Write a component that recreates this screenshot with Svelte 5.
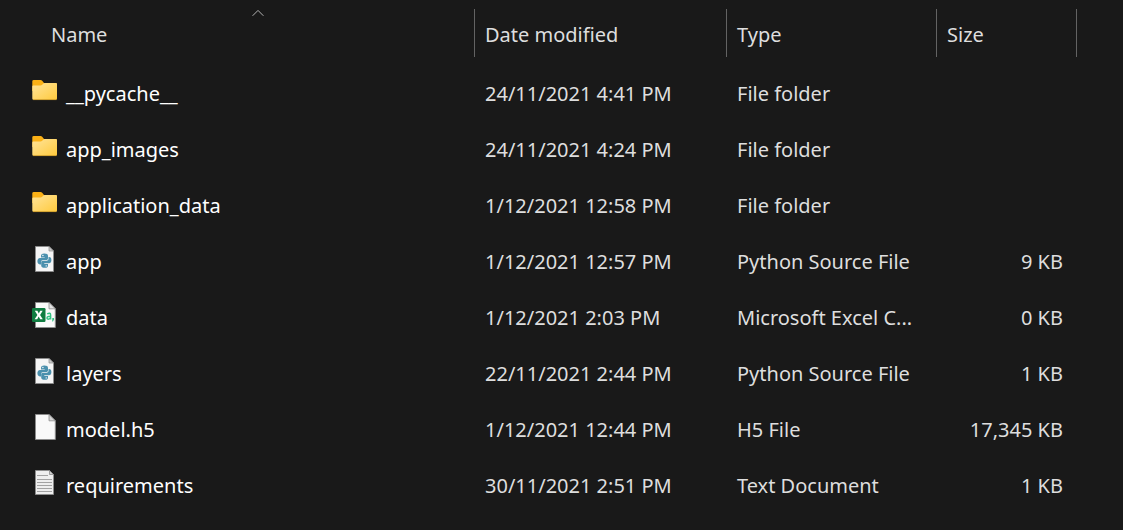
<script>
  const columns = [
    { key: 'name', label: 'Name', sorted: true },
    { key: 'date', label: 'Date modified' },
    { key: 'type', label: 'Type' },
    { key: 'size', label: 'Size' }
  ];

  const files = [
    { icon: 'folder', name: '__pycache__', date: '24/11/2021 4:41 PM', type: 'File folder', size: '' },
    { icon: 'folder', name: 'app_images', date: '24/11/2021 4:24 PM', type: 'File folder', size: '' },
    { icon: 'folder', name: 'application_data', date: '1/12/2021 12:58 PM', type: 'File folder', size: '' },
    { icon: 'python', name: 'app', date: '1/12/2021 12:57 PM', type: 'Python Source File', size: '9 KB' },
    { icon: 'excel', name: 'data', date: '1/12/2021 2:03 PM', type: 'Microsoft Excel C...', size: '0 KB' },
    { icon: 'python', name: 'layers', date: '22/11/2021 2:44 PM', type: 'Python Source File', size: '1 KB' },
    { icon: 'blank', name: 'model.h5', date: '1/12/2021 12:44 PM', type: 'H5 File', size: '17,345 KB' },
    { icon: 'text', name: 'requirements', date: '30/11/2021 2:51 PM', type: 'Text Document', size: '1 KB' }
  ];
</script>

{#snippet fileIcon(kind)}
  <svg class="icon" viewBox="0 0 28 28" aria-hidden="true">
    {#if kind === 'folder'}
      <defs>
        <linearGradient id="folder-front" x1="0" y1="0" x2="1" y2="1">
          <stop offset="0" stop-color="#ffe49a" />
          <stop offset="1" stop-color="#ffca3d" />
        </linearGradient>
      </defs>
      <path d="M0.3 4.3Q0.3 3 1.8 3H8.5Q9.5 3 10.2 3.8L12 6H23.5Q25 6 25 7.5V14H0.3Z" fill="#fbb116" />
      <path d="M0.3 9.5Q0.3 8.5 1.3 8.5H8.5Q9.5 8.5 10.2 7.8L11.4 6.6Q12 6 13 6H24Q25 6 25 7V21.5Q25 22.8 23.7 22.8H1.6Q0.3 22.8 0.3 21.5Z" fill="url(#folder-front)" />
      <path d="M1 22.6H24.5" stroke="#e0a72a" stroke-width="0.7" />
    {:else if kind === 'python'}
      <path d="M3.5 1.5H17L21.5 6V26.5H3.5Z" fill="#f5f5f5" stroke="#8c8c8c" />
      <path d="M17 1.5V6H21.5Z" fill="#c9c9c9" stroke="#8c8c8c" stroke-width="0.7" />
      <g fill="#4b90ad">
        <path d="M12.3 8.6C9.6 8.6 9 9.6 9 11V12.4H12.7V13.1H8C6.3 13.1 5.4 14.5 5.4 16.3S6.4 19.4 7.9 19.4H9V17.3C9 15.9 10.1 15 11.3 15H14.2C15.4 15 16 14.2 16 13.2V11C16 9.4 14.8 8.6 12.3 8.6Z" />
        <path d="M12.7 22.8C15.4 22.8 16 21.8 16 20.4V19H12.3V18.3H17C18.7 18.3 19.4 16.9 19.4 15.1S18.6 12 17.1 12H16.5V13.7C16.5 15.1 15.4 15.8 14.1 15.8H11C9.8 15.8 9.2 16.6 9.2 17.6V20.4C9.2 22 10.4 22.8 12.7 22.8Z" />
      </g>
      <circle cx="10.9" cy="10.5" r="0.7" fill="#fff" />
      <circle cx="14.2" cy="20.9" r="0.7" fill="#fff" />
    {:else if kind === 'excel'}
      <path d="M3.5 1.5H17L23.3 7.8V26.5H3.5Z" fill="#fafafa" stroke="#8c8c8c" />
      <path d="M17 1.5V7.8H23.3Z" fill="#e4e4e4" stroke="#8c8c8c" stroke-width="0.8" />
      <path d="M15.2 12.9Q18.6 11.2 18.6 14V18.5M18.6 15.2Q15 15 15 17Q15.1 18.4 16.8 18.1Q18.3 17.7 18.6 16.6" fill="none" stroke="#35c384" stroke-width="1.5" />
      <path d="M20.3 16.9H22V18.5L21 20.4H20.2Z" fill="#35c384" />
      <rect x="0" y="7" width="13.5" height="14" rx="1.2" fill="#107c41" />
      <path d="M2.8 9.7H5.4L6.8 12.4L8.2 9.7H10.7L8.1 13.9L10.8 18.2H8.2L6.7 15.4L5.2 18.2H2.6L5.4 13.9Z" fill="#fff" />
    {:else if kind === 'blank'}
      <path d="M3.5 1.5H17L23.3 7.8V26.5H3.5Z" fill="#f9f9f9" stroke="#8c8c8c" />
      <path d="M17 1.5V7.8H23.3Z" fill="#d6d6d6" stroke="#8c8c8c" stroke-width="0.8" />
    {:else}
      <path d="M3.5 1.5H17.5L21.5 5.5V25.5H3.5Z" fill="#eeeeee" stroke="#8c8c8c" />
      <path d="M17.5 1.5V5.5H21.5Z" fill="#cfcfcf" stroke="#8c8c8c" stroke-width="0.8" />
      <path d="M5 6.5H16M5 10.5H20M5 13.5H20M5 16.5H20M5 19.5H20M5 22.5H20" stroke="#a2a2a2" />
    {/if}
  </svg>
{/snippet}

<main>
  <table>
    <colgroup>
      <col />
      <col class="date-col" />
      <col class="type-col" />
      <col class="size-col" />
    </colgroup>
    <thead>
      <tr>
        {#each columns as column (column.key)}
          <th class={column.key} scope="col" aria-sort={column.sorted ? 'ascending' : undefined}>
            <button type="button">
              {column.label}
              {#if column.sorted}
                <svg class="arrow" viewBox="0 0 12 8" aria-hidden="true">
                  <path d="M0.6 6.8L6 1.4L11.4 6.8" fill="none" stroke="#b4b4b4" />
                </svg>
              {/if}
            </button>
          </th>
        {/each}
      </tr>
    </thead>
    <tbody>
      {#each files as file (file.name)}
        <tr>
          <td class="name">
            <div class="file">
              {@render fileIcon(file.icon)}
              <span>{file.name}</span>
            </div>
          </td>
          <td>{file.date}</td>
          <td>{file.type}</td>
          <td class="size">{file.size}</td>
        </tr>
      {/each}
    </tbody>
  </table>
</main>

<style>
  :global(body) {
    margin: 0;
    background: #191919;
  }

  main {
    padding-right: 46px;
    color: #dedede;
    font-family: "Noto Sans", "Open Sans", sans-serif;
    font-size: 20px;
    line-height: 28px;
  }

  table {
    width: 100%;
    table-layout: fixed;
    border-collapse: collapse;
  }

  .date-col {
    width: 252px;
  }

  .type-col {
    width: 210px;
  }

  .size-col {
    width: 140px;
  }

  th {
    padding: 9px 0;
    font-weight: 400;
  }

  th.name {
    padding-left: 41px;
  }

  button {
    position: relative;
    display: block;
    width: 100%;
    height: 48px;
    padding: 4px 10px 0;
    border: 0;
    border-right: 1px solid #636363;
    background: none;
    color: inherit;
    font: inherit;
    text-align: left;
  }

  .arrow {
    position: absolute;
    top: 0;
    left: 50%;
    width: 12px;
    height: 8px;
    margin-left: -6px;
  }

  td {
    height: 56px;
    padding: 0 10px;
    white-space: nowrap;
  }

  td.name {
    padding-left: 32px;
    color: #ffffff;
  }

  td.size {
    padding-right: 14px;
    text-align: right;
  }

  .file {
    display: flex;
    align-items: center;
    gap: 6px;
  }

  .icon {
    flex: none;
    width: 28px;
    height: 28px;
    margin-bottom: 6px;
  }
</style>
